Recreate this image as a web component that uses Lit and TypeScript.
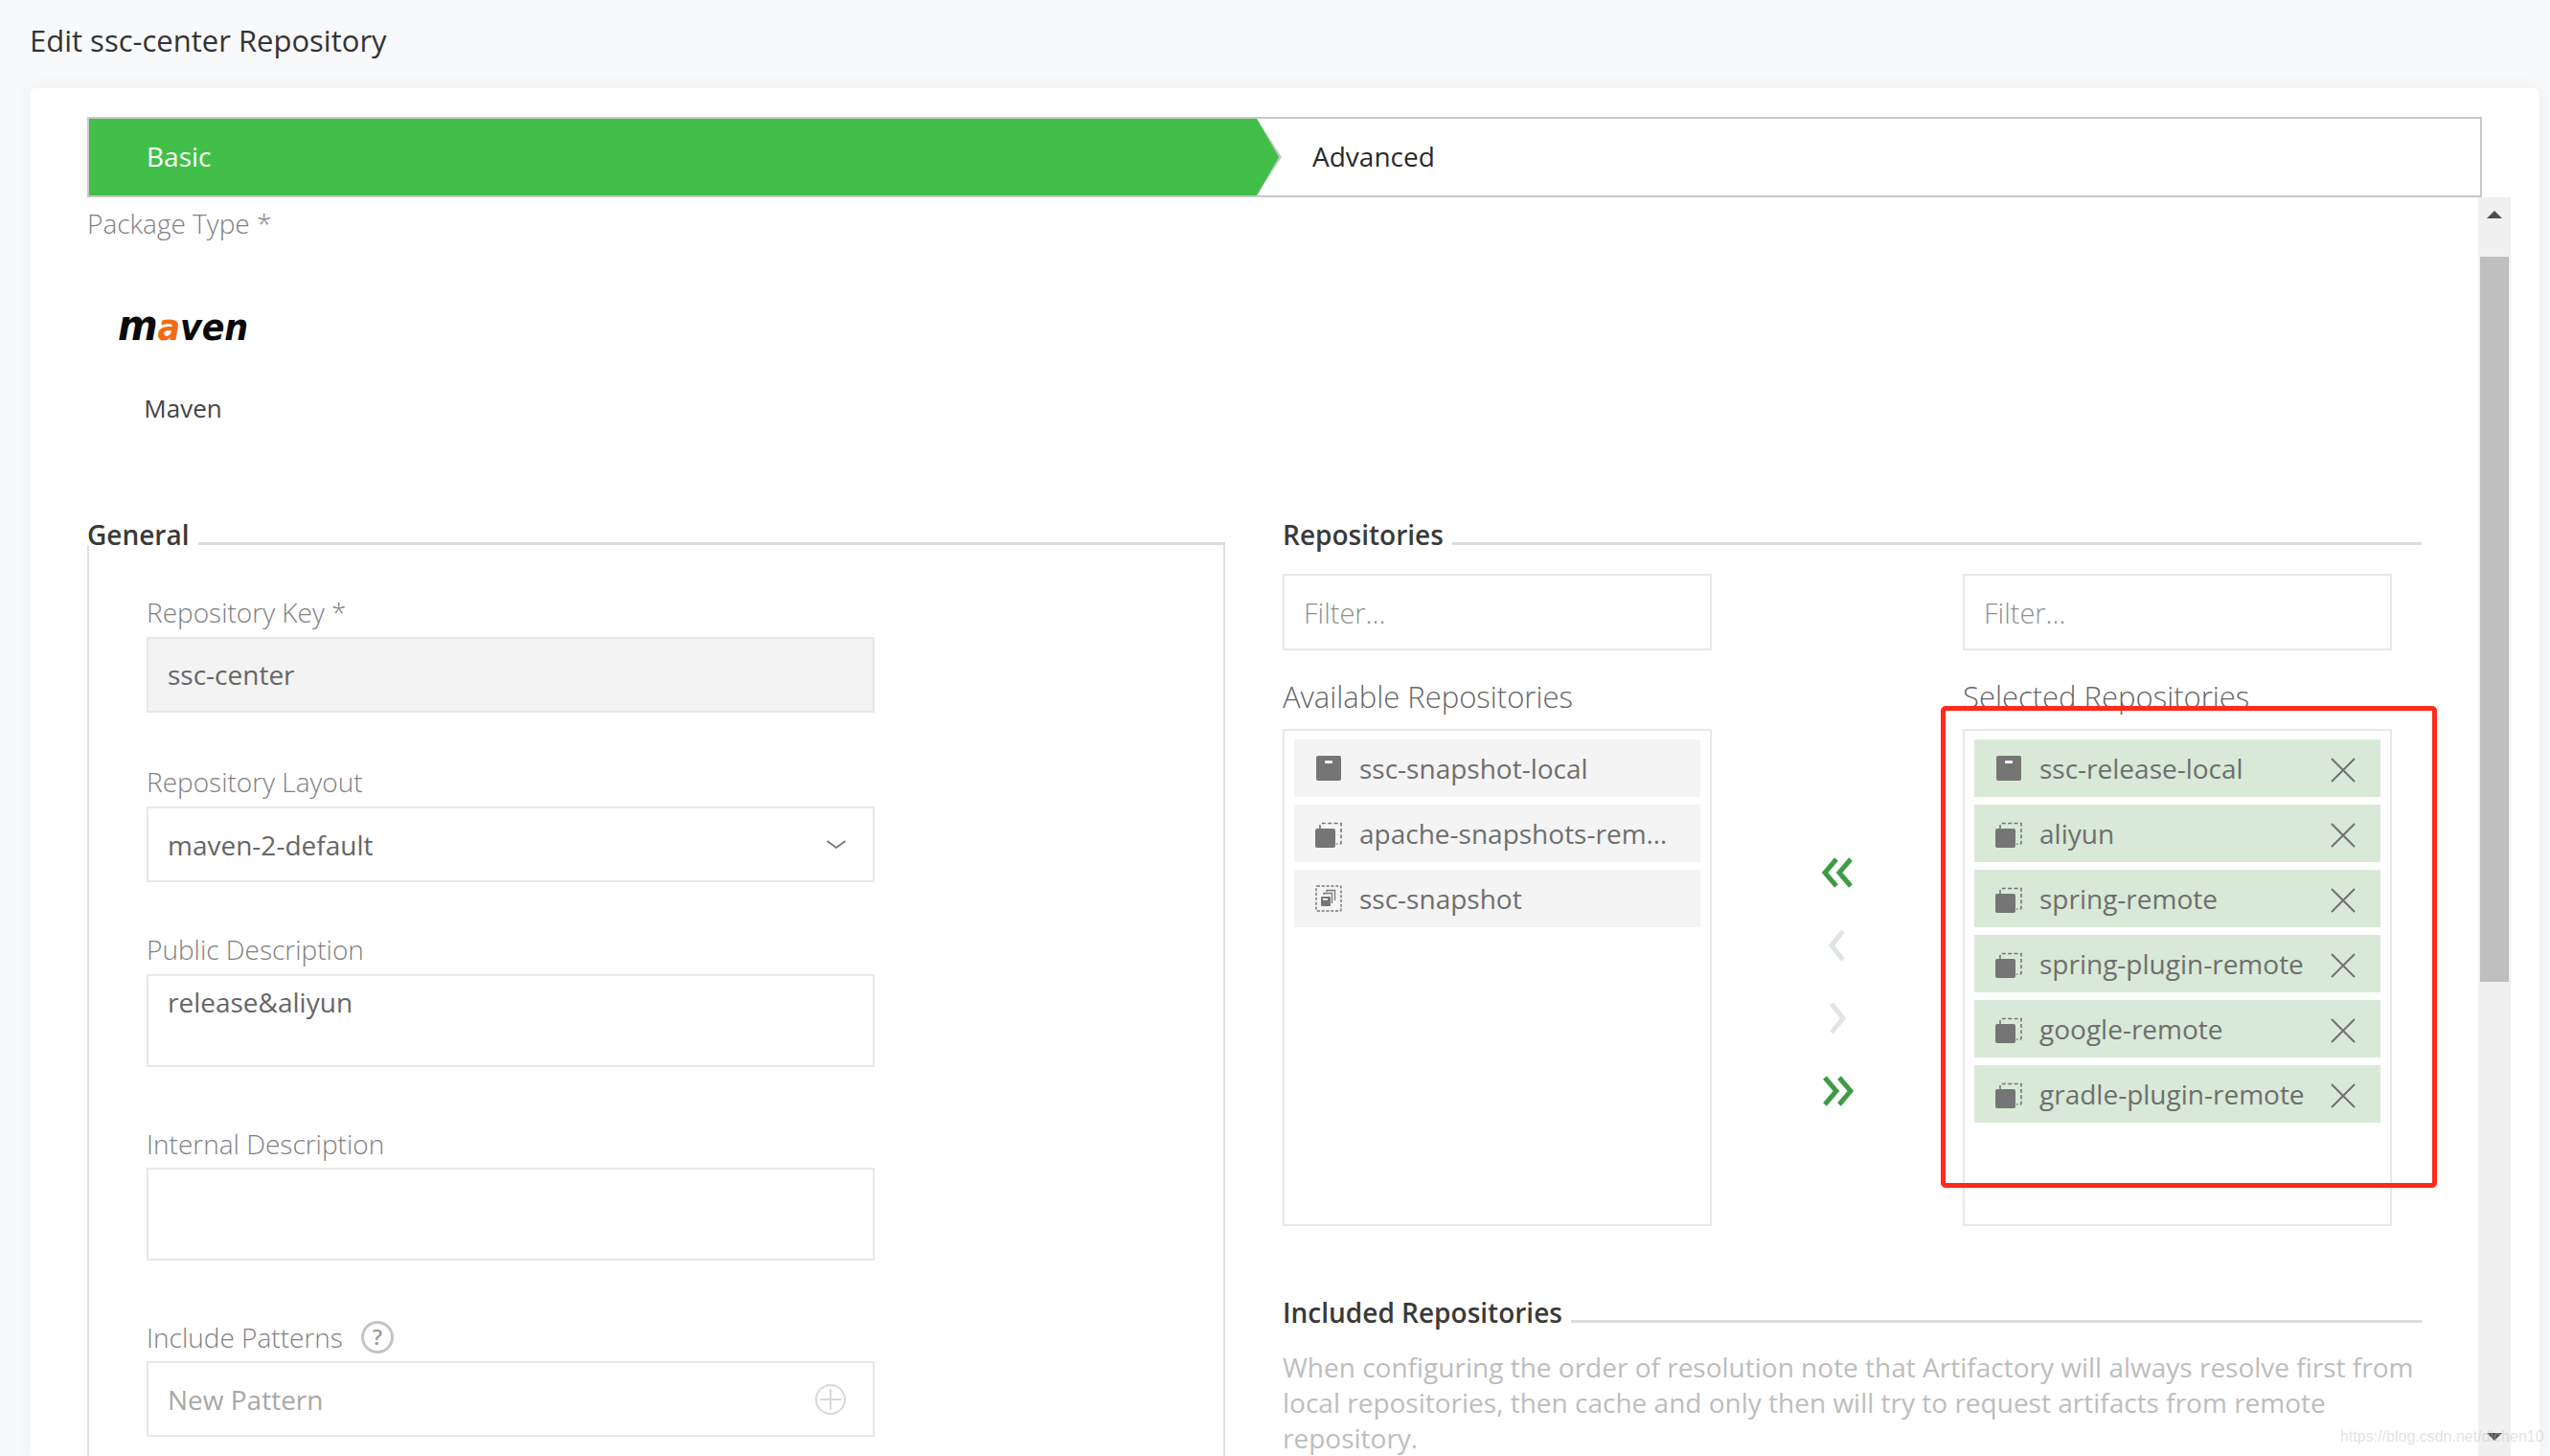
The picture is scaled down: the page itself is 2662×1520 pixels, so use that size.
import { LitElement, html, css, svg } from "lit";
import { customElement } from "lit/decorators.js";

const localIcon = svg`<svg class="ri" viewBox="-1 0 28 26" width="28" height="26"><rect x="0" y="0" width="26" height="26" rx="2" fill="#757575"/><rect x="9" y="5" width="8" height="3" rx="1" fill="#fff"/></svg>`;
const remoteIcon = svg`<svg class="ri" viewBox="0 0 28 30" width="28" height="30"><path d="M5 10V6a1.500 1.500 0 0 1 1.500-1.500H27V25a1 1 0 0 1-1 1H22" fill="none" stroke="#757575" stroke-width="1.6" stroke-dasharray="4 2.4"/><rect x="0" y="10" width="21" height="20" rx="2" fill="#757575"/></svg>`;
const virtualIcon = svg`<svg class="ri" viewBox="0 0 28 28" width="28" height="28"><rect x="1" y="1" width="26" height="26" rx="1" fill="none" stroke="#757575" stroke-width="1.5" stroke-dasharray="3 1.8"/><rect x="6" y="12" width="10" height="10" rx="1" fill="#757575"/><path d="M9 10V8.5h8.5V19M12 7V5.500h8.500V16" fill="none" stroke="#757575" stroke-width="1.300"/><rect x="8" y="14" width="5" height="1.600" fill="#fff"/></svg>`;
const closeIcon = svg`<svg class="close" viewBox="0 0 26 26" width="26" height="26"><path d="M1 1L25 25M25 1L1 25" stroke="#707070" stroke-width="2" fill="none"/></svg>`;

type Repo = { name: string; icon: unknown };

const available: Repo[] = [
  { name: "ssc-snapshot-local", icon: localIcon },
  { name: "apache-snapshots-remote", icon: remoteIcon },
  { name: "ssc-snapshot", icon: virtualIcon },
];
const selected: Repo[] = [
  { name: "ssc-release-local", icon: localIcon },
  { name: "aliyun", icon: remoteIcon },
  { name: "spring-remote", icon: remoteIcon },
  { name: "spring-plugin-remote", icon: remoteIcon },
  { name: "google-remote", icon: remoteIcon },
  { name: "gradle-plugin-remote", icon: remoteIcon },
];

@customElement("app-root")
export class AppRoot extends LitElement {
  static styles = css`
    :host {
      display: block;
      position: relative;
      width: 2662px;
      height: 1520px;
      overflow: hidden;
      background: #f8f9fb;
      font-family: "Open Sans", "Noto Sans", sans-serif;
      color: #6a6a6a;
    }
    * { box-sizing: border-box; }
    .title {
      height: 92px;
      margin: 0;
      padding: 0 0 8px 31px;
      display: flex;
      align-items: center;
      font-size: 31px;
      font-weight: 400;
      color: #333;
    }
    .card {
      margin-left: 31px;
      width: 2620px;
      height: 1428px;
      padding: 30px 30px 0 60px;
      background: #fff;
      border-radius: 6px 6px 0 0;
      box-shadow: 0 0 20px rgba(0, 0, 0, 0.05);
    }
    .tabs {
      display: flex;
      width: 2500px;
      height: 84px;
      border: 2px solid #c8c8c8;
      font-size: 28px;
    }
    .tab-basic {
      position: relative;
      width: 1219px;
      padding: 0 0 3px 60px;
      display: flex;
      align-items: center;
      background: #41bf49;
      color: #fff;
    }
    .tab-basic::before,
    .tab-basic::after {
      content: "";
      position: absolute;
      left: 100%;
      top: 0;
      height: 100%;
      clip-path: polygon(0 0, 100% 50%, 0 100%);
    }
    .tab-basic::before { width: 26px; background: #c8c8c8; }
    .tab-basic::after { width: 23px; background: #41bf49; }
    .tab-adv {
      padding: 0 0 3px 58px;
      display: flex;
      align-items: center;
      color: #2a2a2a;
    }
    .body {
      display: flex;
      height: 1314px;
      overflow: hidden;
    }
    .content {
      width: 2496px;
      flex: none;
    }
    .scroll {
      width: 34px;
      flex: none;
      background: #f0f0f0;
      padding: 0 2px;
      position: relative;
    }
    .thumb {
      margin-top: 62px;
      height: 757px;
      background: #bfbfbf;
    }
    .scroll-arrow {
      position: absolute;
      left: 9px;
      width: 16px;
      height: 8px;
      background: #4d4d4d;
    }
    .scroll-arrow.up { top: 14px; clip-path: polygon(50% 0, 100% 100%, 0 100%); }
    .scroll-arrow.down { top: 1290px; clip-path: polygon(0 0, 100% 0, 50% 100%); }
    .pkg-label {
      font-size: 28px;
      font-weight: 300;
      color: #808080;
      line-height: 36px;
      margin-top: 9px;
    }
    .pkg {
      width: 200px;
      display: flex;
      flex-direction: column;
      align-items: center;
    }
    .logo {
      margin-top: 63px;
      height: 50px;
      line-height: 50px;
      font-family: "DejaVu Sans", sans-serif;
      font-style: italic;
      font-weight: 700;
      font-size: 35px;
      letter-spacing: -0.2px;
      color: #0a0a0a;
      white-space: nowrap;
      transform: scaleY(1.12);
    }
    .logo b { color: #f26b12; font-weight: 700; }
    .logo i { font-size: 40px; }
    .pkg-name {
      margin-top: 45px;
      font-size: 26px;
      line-height: 34px;
      color: #444;
    }
    .cols {
      display: flex;
      margin-top: 96px;
    }
    .left-col {
      width: 1188px;
      flex: none;
      margin-right: 60px;
    }
    .right-col {
      width: 1189px;
      flex: none;
    }
    .legend {
      display: flex;
      align-items: flex-end;
      height: 38px;
      font-size: 28px;
      font-weight: 600;
      color: #3a3a3a;
      line-height: 38px;
    }
    .legend::after {
      content: "";
      flex: 1;
      height: 3px;
      margin-left: 9px;
      margin-bottom: 8px;
      background: #dcdcdc;
    }
    .fieldset {
      border: 2px solid #e0e0e0;
      border-top: 0;
      margin-top: -8px;
      padding: 53px 60px 0 60px;
      height: 1000px;
    }
    .label {
      font-size: 28px;
      font-weight: 300;
      color: #808080;
      line-height: 36px;
      height: 36px;
      display: flex;
      align-items: center;
      gap: 19px;
    }
    .group { margin-bottom: 53px; }
    .group.first { margin-bottom: 55px; }
    .group.wide { margin-bottom: 62px; }
    .group.up .label { padding-bottom: 2px; }
    .field {
      width: 760px;
      height: 79px;
      margin-top: 7px;
      border: 2px solid #e8e8e8;
      padding: 0 20px 2px;
      display: flex;
      align-items: center;
      justify-content: space-between;
      font-size: 28px;
      color: #666;
      background: #fff;
    }
    .field.ro { background: #f3f3f3; }
    .field.sel { padding: 1px 20px 0; }
    .field.area { height: 97px; align-items: flex-start; padding-top: 8px; }
    .field.muted { color: #a8a8a8; padding-bottom: 0; }
    .caret { flex: none; display: block; margin: -1px 8px 0 0; }
    .help { flex: none; display: block; }
    .plus { flex: none; display: block; margin-right: 8px; }
    .filters, .lists {
      display: flex;
      justify-content: space-between;
      width: 1158px;
    }
    .filters { margin-top: 22px; }
    .filter {
      width: 448px;
      height: 80px;
      border: 2px solid #e8e8e8;
      padding: 0 20px;
      display: flex;
      align-items: center;
      font-size: 29px;
      color: #909090;
      font-weight: 300;
    }
    .list-col { width: 448px; }
    .list-title {
      margin-top: 30px;
      height: 36px;
      line-height: 36px;
      font-size: 31px;
      font-weight: 300;
      color: #666;
    }
    .list {
      margin-top: 16px;
      height: 519px;
      border: 2px solid #e8e8e8;
      padding: 9px 10px;
      display: flex;
      flex-direction: column;
      gap: 8px;
    }
    .item {
      height: 60px;
      flex: none;
      display: flex;
      align-items: center;
      padding: 0 26px 0 22px;
      background: #f4f4f4;
      font-size: 28px;
      color: #6e6e6e;
    }
    .item.sel { background: #d8e9d8; }
    .ri { flex: none; margin-right: 18px; }
    .close { flex: none; margin-top: 4px; }
    .item-name {
      flex: 1;
      min-width: 0;
      overflow: hidden;
      white-space: nowrap;
      text-overflow: ellipsis;
    }
    .arrows {
      width: 114px;
      flex: none;
      display: flex;
      flex-direction: column;
      align-items: center;
      gap: 44px;
      padding-top: 216px;
    }
    .arrows svg { display: block; }
    .included { margin-top: 71px; }
    .note {
      width: 1189px;
      margin: 20px 0 0;
      font-size: 28px;
      line-height: 37px;
      font-weight: 400;
      color: #bdbdbd;
    }
    .redbox {
      position: absolute;
      left: 2026px;
      top: 737px;
      width: 518px;
      height: 503px;
      border: 5px solid #ff2a1a;
      border-radius: 5px;
      pointer-events: none;
    }
    .watermark {
      position: absolute;
      left: 2443px;
      top: 1490px;
      font-family: "Liberation Sans", Arial, sans-serif;
      font-size: 16px;
      line-height: 20px;
      color: rgba(190, 190, 190, 0.45);
      white-space: nowrap;
    }
  `;

  private chevrons(dir: "l" | "r", double: boolean, color: string) {
    const d = double
      ? dir === "l"
        ? "M15 2L3 16L15 30M30 2L18 16L30 30"
        : "M3 2L15 16L3 30M18 2L30 16L18 30"
      : dir === "l"
        ? "M22 1L10 16L22 31"
        : "M10 1L22 16L10 31";
    return svg`<svg viewBox="0 0 33 32" width="33" height="32"><path d=${d} fill="none" stroke=${color} stroke-width="5"/></svg>`;
  }

  private group(label: unknown, field: unknown, cls = "") {
    return html`<div class="group ${cls}"><div class="label">${label}</div>${field}</div>`;
  }

  render() {
    return html`
      <h1 class="title">Edit ssc-center Repository</h1>
      <div class="card">
        <div class="tabs">
          <div class="tab-basic">Basic</div>
          <div class="tab-adv">Advanced</div>
        </div>
        <div class="body">
          <div class="content">
            <div class="pkg-label">Package Type *</div>
            <div class="pkg">
              <div class="logo"><i>m</i><b>a</b>ven</div>
              <div class="pkg-name">Maven</div>
            </div>
            <div class="cols">
              <div class="left-col">
                <div class="legend">General</div>
                <div class="fieldset">
                  ${this.group("Repository Key *", html`<div class="field ro">ssc-center</div>`, "first up")}
                  ${this.group(
                    "Repository Layout",
                    html`<div class="field sel">maven-2-default
                      <svg class="caret" width="20" height="9" viewBox="0 0 20 9"><path d="M0.500 1L10 8L19.500 1" fill="none" stroke="#707070" stroke-width="1.600"/></svg>
                    </div>`,
                    "up"
                  )}
                  ${this.group("Public Description", html`<div class="field area">release&amp;aliyun</div>`, "wide up")}
                  ${this.group("Internal Description", html`<div class="field area"></div>`, "wide")}
                  ${this.group(
                    html`Include Patterns
                      <svg class="help" width="34" height="34" viewBox="0 0 34 34">
                        <circle cx="17" cy="17" r="15.500" fill="none" stroke="#c4c4c4" stroke-width="3"/>
                        <text x="17" y="25" text-anchor="middle" font-size="22" font-weight="600" fill="#999" font-family="Open Sans">?</text>
                      </svg>`,
                    html`<div class="field muted">New Pattern
                      <svg class="plus" width="32" height="32" viewBox="0 0 32 32">
                        <circle cx="16" cy="16" r="15" fill="none" stroke="#d8d8d8" stroke-width="2"/>
                        <path d="M16 5V27M5 16H27" stroke="#d8d8d8" stroke-width="2"/>
                      </svg>
                    </div>`
                  )}
                </div>
              </div>
              <div class="right-col">
                <div class="legend">Repositories</div>
                <div class="filters">
                  <div class="filter">Filter...</div>
                  <div class="filter">Filter...</div>
                </div>
                <div class="lists">
                  <div class="list-col">
                    <div class="list-title">Available Repositories</div>
                    <div class="list">
                      ${available.map(
                        (r) => html`<div class="item">${r.icon}<span class="item-name">${r.name}</span></div>`
                      )}
                    </div>
                  </div>
                  <div class="arrows">
                    ${this.chevrons("l", true, "#3d9c45")}
                    ${this.chevrons("l", false, "#dfe5e6")}
                    ${this.chevrons("r", false, "#dfe5e6")}
                    ${this.chevrons("r", true, "#3d9c45")}
                  </div>
                  <div class="list-col">
                    <div class="list-title">Selected Repositories</div>
                    <div class="list">
                      ${selected.map(
                        (r) => html`<div class="item sel">${r.icon}<span class="item-name">${r.name}</span>${closeIcon}</div>`
                      )}
                    </div>
                  </div>
                </div>
                <div class="legend included">Included Repositories</div>
                <p class="note">When configuring the order of resolution note that Artifactory will always resolve first from local repositories, then cache and only then will try to request artifacts from remote repository.</p>
              </div>
            </div>
          </div>
          <div class="scroll">
            <div class="scroll-arrow up"></div>
            <div class="thumb"></div>
            <div class="scroll-arrow down"></div>
          </div>
        </div>
      </div>
      <div class="redbox"></div>
      <div class="watermark">https://blog.csdn.net/dlchen10</div>
    `;
  }
}
